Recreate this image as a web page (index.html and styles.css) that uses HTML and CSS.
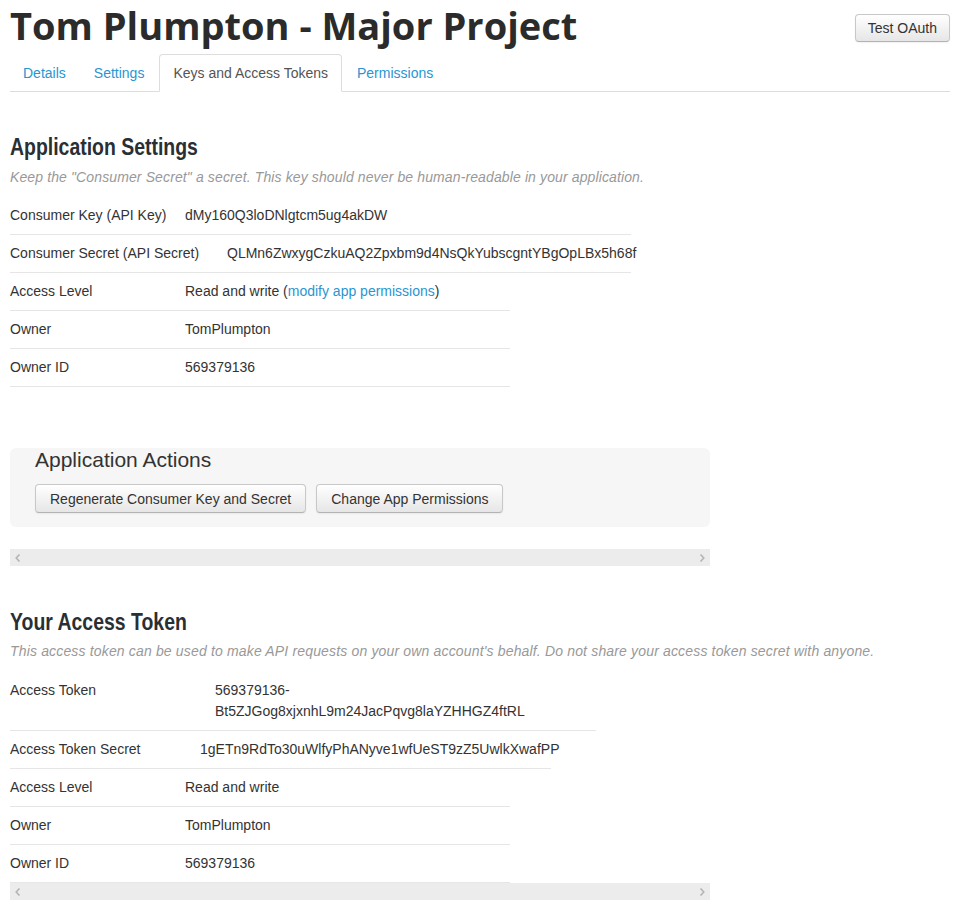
FILE: index.html
```html
<!DOCTYPE html>
<html lang="en">
<head>
<meta charset="utf-8">
<title>Tom Plumpton - Major Project</title>
<link rel="stylesheet" href="styles.css">
</head>
<body>
<div class="page">
  <header class="app-header">
    <h1 class="app-title">Tom Plumpton - Major Project</h1>
    <button class="btn btn-oauth" type="button">Test OAuth</button>
  </header>

  <ul class="tabs">
    <li class="tab"><a href="#">Details</a></li>
    <li class="tab"><a href="#">Settings</a></li>
    <li class="tab tab-active"><a href="#">Keys and Access Tokens</a></li>
    <li class="tab"><a href="#">Permissions</a></li>
  </ul>

  <section class="section section-settings">
    <h2 class="section-title">Application Settings</h2>
    <p class="section-note">Keep the "Consumer Secret" a secret. This key should never be human-readable in your application.</p>
    <dl class="kv kv-w621">
      <dt class="kv-label">Consumer Key (API Key)</dt>
      <dd class="kv-value">dMy160Q3loDNlgtcm5ug4akDW</dd>
    </dl>
    <dl class="kv kv-w621">
      <dt class="kv-label kv-l217">Consumer Secret (API Secret)</dt>
      <dd class="kv-value">QLMn6ZwxygCzkuAQ2Zpxbm9d4NsQkYubscgntYBgOpLBx5h68f</dd>
    </dl>
    <dl class="kv">
      <dt class="kv-label">Access Level</dt>
      <dd class="kv-value">Read and write (<a href="#">modify app permissions</a>)</dd>
    </dl>
    <dl class="kv">
      <dt class="kv-label">Owner</dt>
      <dd class="kv-value">TomPlumpton</dd>
    </dl>
    <dl class="kv">
      <dt class="kv-label">Owner ID</dt>
      <dd class="kv-value">569379136</dd>
    </dl>
  </section>

  <div class="actions">
    <h3 class="actions-title">Application Actions</h3>
    <div class="actions-buttons">
      <button class="btn btn-action" type="button">Regenerate Consumer Key and Secret</button>
      <button class="btn btn-action" type="button">Change App Permissions</button>
    </div>
  </div>
  <div class="hscroll hscroll-1">
    <svg class="hscroll-arrow" width="6" height="8" viewBox="0 0 6 8"><path d="M4.5 0.5 L1.2 4 L4.5 7.5" fill="none" stroke="#b5b5b5" stroke-width="1.6"/></svg>
    <svg class="hscroll-arrow" width="6" height="8" viewBox="0 0 6 8"><path d="M1.5 0.5 L4.8 4 L1.5 7.5" fill="none" stroke="#b5b5b5" stroke-width="1.6"/></svg>
  </div>

  <section class="section section-token">
    <h2 class="section-title">Your Access Token</h2>
    <p class="section-note">This access token can be used to make API requests on your own account's behalf. Do not share your access token secret with anyone.</p>
    <dl class="kv kv-w586">
      <dt class="kv-label kv-l205">Access Token</dt>
      <dd class="kv-value">569379136-<br>Bt5ZJGog8xjxnhL9m24JacPqvg8laYZHHGZ4ftRL</dd>
    </dl>
    <dl class="kv kv-w541">
      <dt class="kv-label kv-l190">Access Token Secret</dt>
      <dd class="kv-value">1gETn9RdTo30uWlfyPhANyve1wfUeST9zZ5UwlkXwafPP</dd>
    </dl>
    <dl class="kv">
      <dt class="kv-label">Access Level</dt>
      <dd class="kv-value">Read and write</dd>
    </dl>
    <dl class="kv">
      <dt class="kv-label">Owner</dt>
      <dd class="kv-value">TomPlumpton</dd>
    </dl>
    <dl class="kv">
      <dt class="kv-label">Owner ID</dt>
      <dd class="kv-value">569379136</dd>
    </dl>
  </section>
  <div class="hscroll">
    <svg class="hscroll-arrow" width="6" height="8" viewBox="0 0 6 8"><path d="M4.5 0.5 L1.2 4 L4.5 7.5" fill="none" stroke="#b5b5b5" stroke-width="1.6"/></svg>
    <svg class="hscroll-arrow" width="6" height="8" viewBox="0 0 6 8"><path d="M1.5 0.5 L4.8 4 L1.5 7.5" fill="none" stroke="#b5b5b5" stroke-width="1.6"/></svg>
  </div>
</div>
</body>
</html>
```

FILE: styles.css
```css
* { box-sizing: border-box; }

html, body {
  margin: 0;
  padding: 0;
  background: #fff;
}

body {
  font-family: "Liberation Sans", Arial, sans-serif;
  font-size: 14px;
  line-height: 20px;
  color: #333;
}

a {
  color: #2a95d2;
  text-decoration: none;
}

.page {
  padding: 0 12px 0 10px;
}

/* header */
.app-header {
  display: flex;
  justify-content: space-between;
  align-items: flex-start;
}

.app-title {
  margin: 0;
  font-family: "Open Sans", Lato, sans-serif;
  font-weight: 700;
  font-size: 38px;
  line-height: 50px;
  color: #2b2b2b;
}

.btn {
  font-family: "Liberation Sans", Arial, sans-serif;
  font-size: 14px;
  line-height: 20px;
  color: #333;
  padding: 4px 12px;
  border: 1px solid #c8c8c8;
  border-bottom-color: #b3b3b3;
  border-radius: 4px;
  background: linear-gradient(#ffffff, #e6e6e6);
  box-shadow: inset 0 1px 0 rgba(255,255,255,.2), 0 1px 2px rgba(0,0,0,.06);
  cursor: pointer;
}

.btn-oauth {
  margin-top: 14px;
  padding: 3px 12px;
}

.btn-action {
  padding: 4px 14px 3px;
}

/* tabs */
.tabs {
  list-style: none;
  margin: 4px 0 0;
  padding: 0;
  display: flex;
  border-bottom: 1px solid #ddd;
}

.tab {
  margin: 0 2px -1px 0;
}

.tab a {
  display: block;
  padding: 8px 12px;
  line-height: 20px;
  border: 1px solid transparent;
  border-radius: 4px 4px 0 0;
}

.tab-active a {
  padding: 8px 13px 8px 13px;
  color: #555;
  background: #fff;
  border-color: #ddd #ddd transparent;
}

/* sections */
.section-title {
  margin: 0;
  font-family: "Liberation Sans", Arial, sans-serif;
  font-weight: 700;
  font-size: 24px;
  line-height: 30px;
  color: #292f33;
  transform: scaleX(0.81);
  transform-origin: left center;
}

.section-settings {
  margin-top: 40px;
}

.section-token {
  margin-top: 41px;
}

.section-note {
  margin: 5px 0 10px;
  font-style: italic;
  color: #999;
  line-height: 20px;
  letter-spacing: 0.12px;
}

.section-token .section-note {
  margin-top: 4px;
  margin-bottom: 11px;
  letter-spacing: 0.16px;
}

.kv {
  display: flex;
  margin: 0;
  width: 500px;
  padding: 8px 0;
  line-height: 21px;
  border-bottom: 1px solid #e6e6e6;
}

.kv-w621 { width: 621px; }
.kv-w586 { width: 586px; }
.kv-w541 { width: 541px; }

.kv-label {
  flex: none;
  width: 175px;
  margin: 0;
}

.kv-l217 { width: 217px; }
.kv-l205 { width: 205px; }
.kv-l190 { width: 190px; }

.kv-value {
  margin: 0;
  white-space: nowrap;
}

/* actions */
.actions {
  margin-top: 61px;
  width: 700px;
  background: #f6f6f6;
  border-radius: 6px;
  padding: 0 25px 14px;
}

.actions-title {
  margin: 0;
  font-weight: 400;
  font-size: 21px;
  line-height: 24px;
  color: #333;
}

.actions-buttons {
  display: flex;
  gap: 10px;
  margin-top: 12px;
}

/* fake horizontal scrollbar */
.hscroll {
  width: 700px;
  height: 17px;
  background: #ececec;
  display: flex;
  justify-content: space-between;
  align-items: center;
  padding: 0 5px;
}

.hscroll-1 {
  margin-top: 22px;
}
```
